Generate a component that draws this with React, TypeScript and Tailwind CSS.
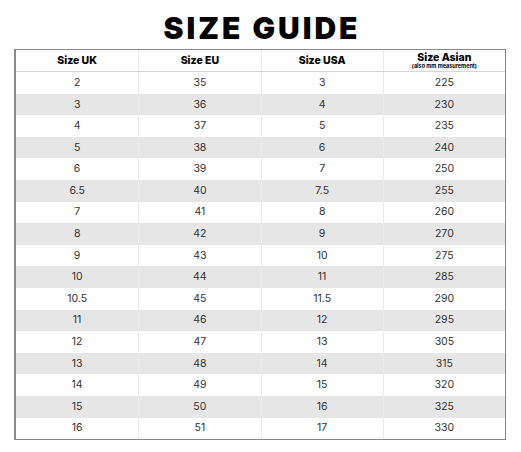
import React from 'react';

const rows: [string, string, string, string][] = [
  ['2', '35', '3', '225'],
  ['3', '36', '4', '230'],
  ['4', '37', '5', '235'],
  ['5', '38', '6', '240'],
  ['6', '39', '7', '250'],
  ['6.5', '40', '7.5', '255'],
  ['7', '41', '8', '260'],
  ['8', '42', '9', '270'],
  ['9', '43', '10', '275'],
  ['10', '44', '11', '285'],
  ['10.5', '45', '11.5', '290'],
  ['11', '46', '12', '295'],
  ['12', '47', '13', '305'],
  ['13', '48', '14', '315'],
  ['14', '49', '15', '320'],
  ['15', '50', '16', '325'],
  ['16', '51', '17', '330'],
];

export default function App() {
  return (
    <div className="w-[521px] h-[452px] bg-white font-['Inter','Noto_Sans',sans-serif] text-[#333]">
      {/* 标题 */}
      <div className="pt-[10px] mb-[3px] text-center pl-[3px]">
        <h1 className="text-[30px] leading-[36px] font-black text-black tracking-[3px]">SIZE GUIDE</h1>
      </div>

      {/* 尺码表 */}
      <div className="ml-[14px] w-[492px] border border-l-2 border-[#8a8a8a]">
        <div className="grid grid-cols-4 h-[22px] border-b border-[#d6d6d6]">
          <div className="flex items-center justify-center text-[10.5px] font-extrabold text-black">Size UK</div>
          <div className="flex items-center justify-center text-[10.5px] font-extrabold text-black border-l border-[#ececec]">Size EU</div>
          <div className="flex items-center justify-center text-[10.5px] font-extrabold text-black border-l border-[#ececec]">Size USA</div>
          <div className="flex flex-col items-center justify-center text-black border-l border-[#ececec]">
            <span className="text-[10.5px] font-extrabold leading-[11px]">Size Asian</span>
            <span className="text-[5.5px] font-bold leading-[7px]">(also mm measurement)</span>
          </div>
        </div>
        {rows.map((r, i) => (
          <div
            key={i}
            className={`grid grid-cols-4 h-[21.6px] text-[10.5px] ${i % 2 === 1 ? 'bg-[#e6e6e6]' : 'bg-white'}`}
          >
            {r.map((c, j) => (
              <div
                key={j}
                className={`flex items-center justify-center ${j > 0 ? 'border-l border-[#ececec]' : ''}`}
              >
                {c}
              </div>
            ))}
          </div>
        ))}
      </div>
    </div>
  );
}
